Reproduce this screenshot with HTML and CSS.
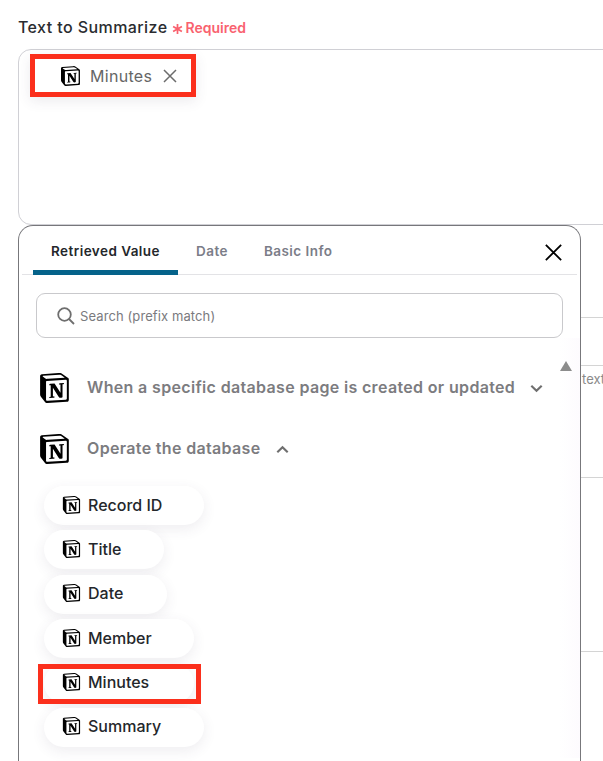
FILE: index.html
```html
<!DOCTYPE html>
<html lang="en">
<head>
<meta charset="utf-8">
<title>Text to Summarize</title>
<link rel="stylesheet" href="styles.css">
</head>
<body>
<svg class="defs" aria-hidden="true">
  <symbol id="notion" viewBox="0 0 96 100">
    <path d="M6.017 4.313l55.333 -4.087c6.797 -0.583 8.543 -0.19 12.817 2.917l17.663 12.443c2.913 2.14 3.883 2.723 3.883 5.053v68.243c0 4.277 -1.553 6.807 -6.99 7.193L24.467 99.967c-4.08 0.193 -6.023 -0.39 -8.16 -3.113L3.3 79.94c-2.333 -3.113 -3.3 -5.443 -3.3 -8.167V11.113c0 -3.497 1.553 -6.413 6.017 -6.8z" fill="#fff"/>
    <path d="M61.35 0.227l-55.333 4.087C1.553 4.7 0 7.617 0 11.113v60.66c0 2.723 0.967 5.053 3.3 8.167l13.007 16.913c2.137 2.723 4.08 3.307 8.16 3.113l64.257 -3.89c5.433 -0.387 6.99 -2.917 6.99 -7.193V20.64c0 -2.21 -0.873 -2.847 -3.443 -4.733L74.167 3.143c-4.273 -3.107 -6.02 -3.5 -12.817 -2.917zM25.92 19.523c-5.247 0.353 -6.437 0.433 -9.417 -1.99L8.927 11.507c-0.77 -0.78 -0.383 -1.753 1.557 -1.947l53.193 -3.887c4.467 -0.39 6.793 1.167 8.54 2.527l9.123 6.61c0.39 0.197 1.36 1.36 0.193 1.36l-54.933 3.307 -0.68 0.047zM19.803 88.3V30.367c0 -2.53 0.777 -3.697 3.103 -3.893L86 22.78c2.14 -0.193 3.107 1.167 3.107 3.693v57.547c0 2.53 -0.39 4.67 -3.883 4.863l-60.377 3.5c-3.493 0.193 -5.043 -0.97 -5.043 -4.083zm59.6 -54.827c0.387 1.75 0 3.5 -1.75 3.7l-2.91 0.577v42.773c-2.527 1.36 -4.853 2.137 -6.797 2.137 -3.107 0 -3.883 -0.973 -6.21 -3.887l-19.03 -29.94v28.967l6.02 1.363s0 3.5 -4.857 3.5l-13.39 0.777c-0.39 -0.78 0 -2.723 1.357 -3.11l3.497 -0.97v-38.3L30.48 40.667c-0.39 -1.75 0.58 -4.277 3.3 -4.473l14.367 -0.967 19.8 30.327v-26.83l-5.047 -0.58c-0.39 -2.143 1.163 -3.7 3.103 -3.89l13.4 -0.78z" fill="#000"/>
  </symbol>
</svg>

<div class="backdrop">
  <div class="rule rule-a"></div>
  <div class="rule rule-b"></div>
  <div class="peek">text</div>
  <div class="rule rule-c"></div>
  <div class="rule rule-d"></div>
</div>

<main class="page">
  <div class="label-row">
    <span class="label">Text to Summarize</span>
    <svg class="star" viewBox="0 0 12 12" aria-hidden="true"><path d="M6 0.5v11M1.2 3.2l9.6 5.6M10.8 3.2l-9.6 5.6" stroke="#f9626f" stroke-width="1.9" fill="none"/></svg>
    <span class="required">Required</span>
  </div>

  <div class="textarea">
    <div class="chip">
      <svg class="ico-chip"><use href="#notion"/></svg>
      <span class="chip-text">Minutes</span>
      <svg class="chip-x" viewBox="0 0 14 14" aria-hidden="true"><path d="M1 1l12 12M13 1L1 13" stroke="#6c6c6c" stroke-width="1.5" fill="none"/></svg>
    </div>
  </div>

  <section class="panel">
    <div class="tabs">
      <div class="tab tab-active">Retrieved Value</div>
      <div class="tab tab-date">Date</div>
      <div class="tab tab-basic">Basic Info</div>
      <svg class="close" viewBox="0 0 16 16" aria-hidden="true"><path d="M0.8 0.8l14.4 14.4M15.2 0.8L0.8 15.2" stroke="#000" stroke-width="1.7" fill="none"/></svg>
    </div>

    <div class="search">
      <svg class="search-ico" viewBox="0 0 18 18" aria-hidden="true"><circle cx="7.5" cy="7.5" r="6.3" stroke="#6e6e6e" stroke-width="1.8" fill="none"/><path d="M12 12l5 5" stroke="#6e6e6e" stroke-width="1.8" fill="none"/></svg>
      <span class="search-text">Search (prefix match)</span>
    </div>

    <div class="body">
      <div class="list">
        <div class="group group-first">
          <svg class="ico-group"><use href="#notion"/></svg>
          <span class="group-text">When a specific database page is created or updated</span>
          <svg class="caret" viewBox="0 0 12 8" aria-hidden="true"><path d="M1.2 1.4L6 6l4.8-4.6" stroke="#6f6f6f" stroke-width="2" fill="none"/></svg>
        </div>
        <div class="group group-second">
          <svg class="ico-group"><use href="#notion"/></svg>
          <span class="group-text">Operate the database</span>
          <svg class="caret" viewBox="0 0 12 8" aria-hidden="true"><path d="M1.2 6.6L6 2l4.8 4.6" stroke="#6f6f6f" stroke-width="2" fill="none"/></svg>
        </div>
        <div class="pills">
          <div class="pill pill-record"><svg class="ico-pill"><use href="#notion"/></svg><span>Record ID</span></div>
          <div class="pill pill-title"><svg class="ico-pill"><use href="#notion"/></svg><span>Title</span></div>
          <div class="pill pill-date"><svg class="ico-pill"><use href="#notion"/></svg><span>Date</span></div>
          <div class="pill pill-member"><svg class="ico-pill"><use href="#notion"/></svg><span>Member</span></div>
          <div class="pill pill-minutes"><svg class="ico-pill"><use href="#notion"/></svg><span>Minutes</span></div>
          <div class="pill pill-summary"><svg class="ico-pill"><use href="#notion"/></svg><span>Summary</span></div>
        </div>
      </div>
      <div class="scroll"><div class="scroll-up"></div></div>
    </div>
  </section>
</main>

<div class="mark mark-chip"></div>
<div class="mark mark-pill"></div>
</body>
</html>
```

FILE: styles.css
```css
* { box-sizing: border-box; }

html, body {
  margin: 0;
  height: 761px;
  overflow: hidden;
  background: #fff;
}

body {
  position: relative;
  font-family: Inter, "Liberation Sans", sans-serif;
  color: #24272b;
}

.defs { position: absolute; width: 0; height: 0; }

.backdrop { position: absolute; inset: 0; }
.rule { position: absolute; left: 581px; right: 0; height: 1px; background: #d4d4d4; }
.rule-a { top: 317px; }
.rule-b { top: 365px; }
.rule-c { top: 477px; }
.rule-d { top: 651px; }
.peek { position: absolute; left: 582px; top: 372px; font-size: 13px; line-height: 15px; color: #8a8a8a; }

.page { position: relative; padding: 18px 0 0 18px; }

.label-row { display: flex; align-items: center; height: 18px; }
.label { font-size: 16px; font-weight: 500; letter-spacing: 0.42px; color: #2a2c30; }
.star { width: 11px; height: 12px; margin: 3px 0 0 5px; }
.required { margin: 1px 0 0 2px; font-size: 14px; font-weight: 600; color: #f9626f; }

.textarea {
  width: 640px;
  height: 176px;
  margin-top: 13px;
  padding: 16px 0 0 42px;
  border: 1px solid #d0d0d5;
  border-radius: 13px;
  background: #fff;
}

.chip { display: flex; align-items: center; height: 20px; }
.ico-chip { width: 19px; height: 20px; }
.chip-text { margin-left: 10px; font-size: 16px; letter-spacing: 0.3px; color: #666; }
.chip-x { width: 14px; height: 14px; margin-left: 11px; }

.panel {
  width: 563px;
  height: 600px;
  margin-top: 0;
  border: 1px solid #77777b;
  border-bottom: 0;
  border-radius: 15px 15px 0 0;
  background: #fff;
}

.tabs {
  position: relative;
  display: flex;
  height: 49px;
  margin: 0 3px;
  border-bottom: 1px solid #e3e3e6;
  font-size: 13.5px;
  font-weight: 600;
  letter-spacing: 0.45px;
  color: #7b7d88;
}
.tab { padding-top: 17px; line-height: 16px; }
.tab-active {
  width: 145px;
  margin-left: 11px;
  height: 49px;
  border-bottom: 5px solid #05638a;
  border-radius: 5px 5px 0 0;
  text-align: center;
  color: #24272b;
}
.tab-date { margin-left: 18px; }
.tab-basic { margin-left: 36px; }
.close { position: absolute; right: 15px; top: 18px; width: 17px; height: 17px; }

.search {
  display: flex;
  align-items: center;
  width: 527px;
  height: 45px;
  margin: 18px 0 0 17px;
  padding-left: 20px;
  border: 1px solid #c9c9cc;
  border-radius: 9px;
}
.search-ico { width: 18px; height: 18px; }
.search-text { margin-left: 5px; font-size: 13px; color: #7a7a7e; letter-spacing: 0.1px; }

.body { display: flex; height: 420px; }
.list { width: 540px; padding: 35px 0 0 21px; }

.group { display: flex; align-items: center; height: 30px; }
.group-second { margin-top: 31px; }
.ico-group { flex: none; width: 29px; height: 30px; }
.group-text { margin: -2px 0 0 18px; font-size: 16px; font-weight: 600; letter-spacing: 0.34px; color: #7c7c7f; white-space: nowrap; }
.caret { flex: none; width: 13px; height: 9px; margin: 1px 0 0 15px; }

.pills { display: flex; flex-direction: column; gap: 5.4px; margin: 22px 0 0 4px; }
.pill {
  display: flex;
  align-items: center;
  height: 39px;
  padding-left: 18px;
  border-radius: 20px;
  background: #fff;
  box-shadow: 0 4px 14px rgba(70, 60, 90, 0.09);
  font-size: 16px;
  font-weight: 500;
  color: #24272b;
}
.pill span { margin-top: -2px; }
.ico-pill { flex: none; width: 19px; height: 18px; margin: -2px 7px 0 0; }
.pill-record, .pill-summary { width: 160px; }
.pill-title { width: 120px; }
.pill-date { width: 123px; }
.pill-member { width: 150px; }
.pill-minutes { width: 150px; }

.scroll { position: relative; width: 21px; background: linear-gradient(90deg, #fff, #fdfbfe); }
.scroll-up {
  position: absolute;
  top: 23px;
  left: 1px;
  width: 0;
  height: 0;
  border-left: 6.5px solid transparent;
  border-right: 6.5px solid transparent;
  border-bottom: 10px solid #8c8c8c;
}

.mark { position: absolute; border: 5px solid #fb2f1c; }
.mark-chip { left: 30px; top: 54px; width: 166px; height: 43px; box-shadow: 0 4px 12px rgba(70, 60, 90, 0.1); }
.mark-pill { left: 38px; top: 664px; width: 163px; height: 40px; }
```
